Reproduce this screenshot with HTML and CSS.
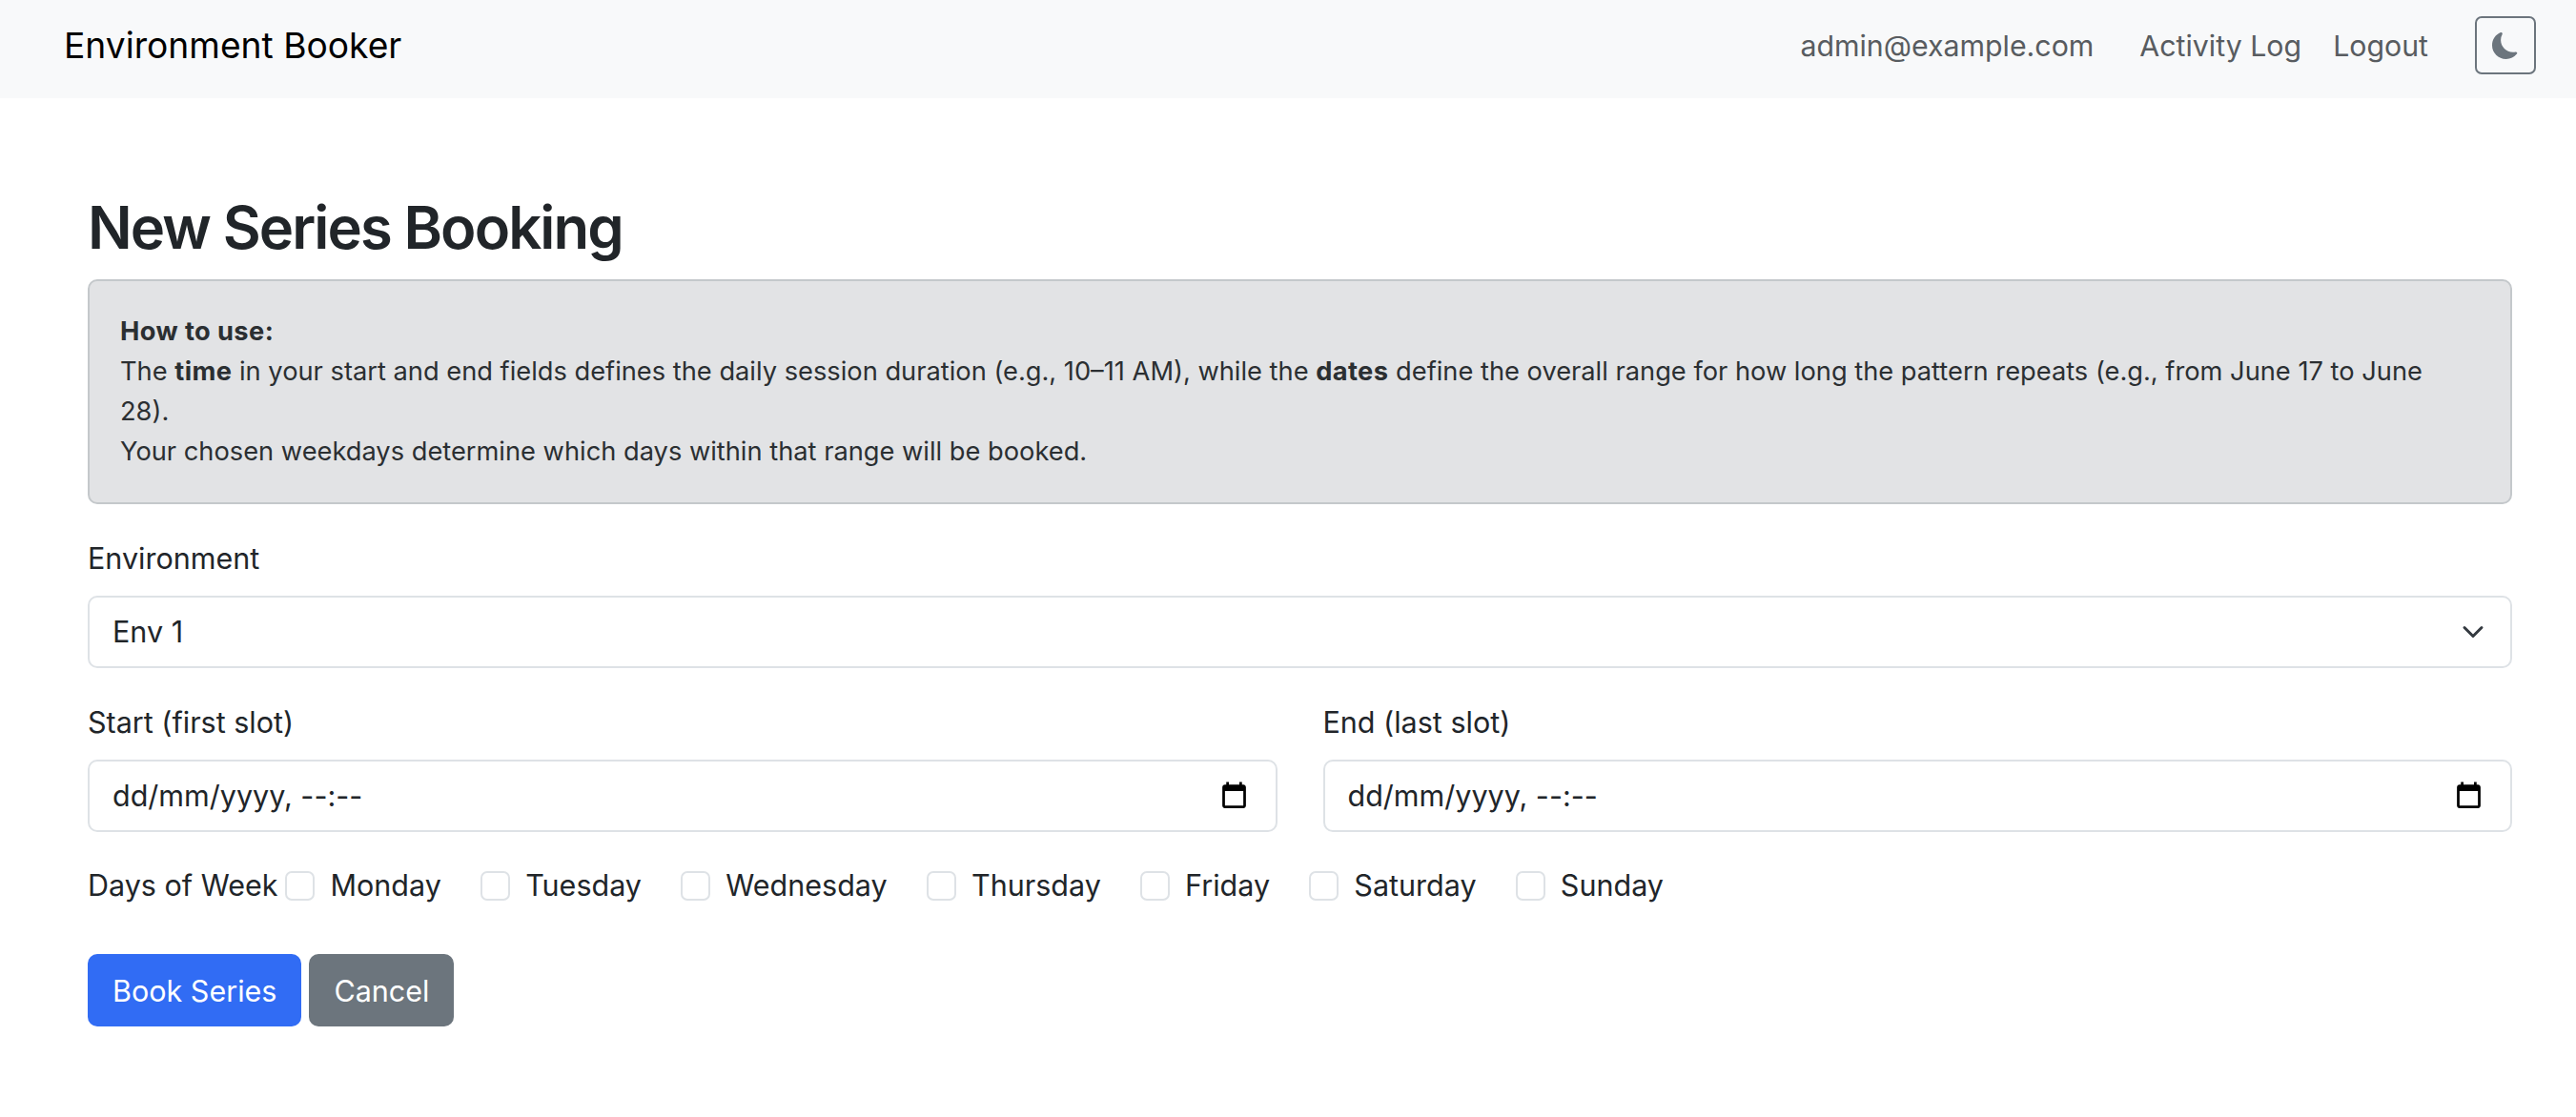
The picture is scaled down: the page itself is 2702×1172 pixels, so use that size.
FILE: index.html
```html
<!DOCTYPE html>
<html lang="en">
<head>
    <meta charset="UTF-8">
    <meta name="viewport" content="width=device-width, initial-scale=1.0">
    <title>New Series Booking</title>
    <link rel="stylesheet" href="styles.css">
</head>
<body>
    <nav class="navbar">
        <a class="brand" href="#">Environment Booker</a>
        <div class="nav-right">
            <span class="nav-user">admin@example.com</span>
            <a class="nav-link" href="#">Activity Log</a>
            <a class="nav-link" href="#">Logout</a>
            <button class="theme-toggle" type="button" aria-label="Toggle theme">
                <svg viewBox="0 0 16 16" width="28" height="28" fill="#6c757d">
                    <path d="M6 .278a.768.768 0 0 1 .08.858 7.208 7.208 0 0 0-.878 3.46c0 4.021 3.278 7.277 7.318 7.277.527 0 1.04-.055 1.533-.16a.787.787 0 0 1 .81.316.733.733 0 0 1-.031.893A8.349 8.349 0 0 1 8.344 16C3.734 16 0 12.286 0 7.71 0 4.266 2.114 1.312 5.124.06A.752.752 0 0 1 6 .278z"/>
                </svg>
            </button>
        </div>
    </nav>
    <main class="container">
        <h1>New Series Booking</h1>
        <div class="alert">
            <strong>How to use:</strong><br>
            The <strong>time</strong> in your start and end fields defines the daily session duration (e.g., 10–11 AM), while the <strong>dates</strong> define the overall range for how long the pattern repeats (e.g., from June 17 to June<br>
            28).<br>
            Your chosen weekdays determine which days within that range will be booked.
        </div>
        <form>
            <div class="field">
                <label class="form-label" for="env">Environment</label>
                <div class="form-control" id="env">
                    <span>Env 1</span>
                    <svg class="chevron" viewBox="0 0 16 16" width="24" height="24" fill="none" stroke="#343a40" stroke-width="2" stroke-linecap="round" stroke-linejoin="round">
                        <path d="M2 5l6 6 6-6"/>
                    </svg>
                </div>
            </div>
            <div class="row">
                <div class="field">
                    <label class="form-label">Start (first slot)</label>
                    <div class="form-control date-input">
                        <span>dd/mm/yyyy, --:--</span>
                        <svg class="calendar" viewBox="0 0 24 24" width="33" height="33">
                            <path d="M19 3h-1V1h-2v2H8V1H6v2H5c-1.1 0-2 .9-2 2v14c0 1.1.9 2 2 2h14c1.100 0 2-.9 2-2V5c0-1.100-.9-2-2-2zm0 16H5V8h14v11z"/>
                        </svg>
                    </div>
                </div>
                <div class="field">
                    <label class="form-label">End (last slot)</label>
                    <div class="form-control date-input">
                        <span>dd/mm/yyyy, --:--</span>
                        <svg class="calendar" viewBox="0 0 24 24" width="33" height="33">
                            <path d="M19 3h-1V1h-2v2H8V1H6v2H5c-1.1 0-2 .9-2 2v14c0 1.1.9 2 2 2h14c1.100 0 2-.9 2-2V5c0-1.100-.9-2-2-2zm0 16H5V8h14v11z"/>
                        </svg>
                    </div>
                </div>
            </div>
            <div class="days">
                <span class="days-label">Days of Week</span>
                <label class="day"><span class="check"></span>Monday</label>
                <label class="day"><span class="check"></span>Tuesday</label>
                <label class="day"><span class="check"></span>Wednesday</label>
                <label class="day"><span class="check"></span>Thursday</label>
                <label class="day"><span class="check"></span>Friday</label>
                <label class="day"><span class="check"></span>Saturday</label>
                <label class="day"><span class="check"></span>Sunday</label>
            </div>
            <div class="actions">
                <button class="btn btn-primary" type="submit">Book Series</button>
                <button class="btn btn-secondary" type="button">Cancel</button>
            </div>
        </form>
    </main>
</body>
</html>
```

FILE: styles.css
```css
body {
    margin: 0;
    background: #fff;
    color: #212529;
    font-family: Inter, "Liberation Sans", sans-serif;
    font-size: 30.5px;
    line-height: 46px;
}
.navbar {
    display: flex;
    align-items: center;
    justify-content: space-between;
    height: 103px;
    padding: 0 42px 8px 67px;
    background: #f8f9fa;
    box-sizing: border-box;
}
.brand {
    color: #000;
    font-size: 37.2px;
    text-decoration: none;
}
.nav-right {
    display: flex;
    align-items: center;
}
.nav-user, .nav-link {
    color: #585c60;
    font-size: 30.3px;
    text-decoration: none;
}
.nav-user {
    margin-right: 48px;
}
.nav-link {
    margin-right: 33px;
}
.nav-link:last-of-type {
    margin-right: 49px;
}
.theme-toggle {
    display: flex;
    align-items: center;
    justify-content: center;
    width: 64px;
    height: 61px;
    padding: 0;
    background: transparent;
    border: 2px solid #6c757d;
    border-radius: 7px;
}
.container {
    padding: 0 67px 0 92px;
}
h1 {
    margin: 0;
    padding-top: 103px;
    font-size: 61.5px;
    font-weight: 600;
    letter-spacing: -1.9px;
    line-height: 66px;
}
.alert {
    margin-top: 21px;
    padding: 32px 33px 32px 32px;
    background: #e2e3e5;
    border: 2px solid #c4c8cb;
    border-radius: 10px;
    font-size: 27.25px;
    line-height: 42px;
    color: #2b2f32;
}
.alert strong {
    font-weight: 700;
    letter-spacing: 0.4px;
}
.field {
    flex: 1;
}
.form-label {
    display: block;
    margin-bottom: 16px;
}
form {
    margin-top: 34px;
}
.form-control {
    display: flex;
    align-items: center;
    justify-content: space-between;
    height: 76px;
    padding: 0 27px 0 24px;
    box-sizing: border-box;
    background: #fff;
    border: 2px solid #dee2e6;
    border-radius: 10px;
}
.row {
    display: flex;
    gap: 48px;
    margin-top: 34px;
}
.days {
    display: flex;
    align-items: center;
    margin-top: 33px;
}
.days-label {
    margin-right: 8px;
}
.day {
    display: flex;
    align-items: center;
    margin-right: 41.3px;
}
.check {
    width: 31px;
    height: 31px;
    margin-right: 16px;
    box-sizing: border-box;
    background: #fff;
    border: 2px solid #dee2e6;
    border-radius: 7px;
}
.actions {
    display: flex;
    gap: 8px;
    margin-top: 49px;
}
.btn {
    height: 76px;
    padding: 0 26px;
    border: none;
    border-radius: 10px;
    color: #fff;
    font-family: inherit;
    font-size: 30.5px;
}
.btn-primary {
    background: #316cf4;
}
.btn-secondary {
    background: #6c757d;
}
```
